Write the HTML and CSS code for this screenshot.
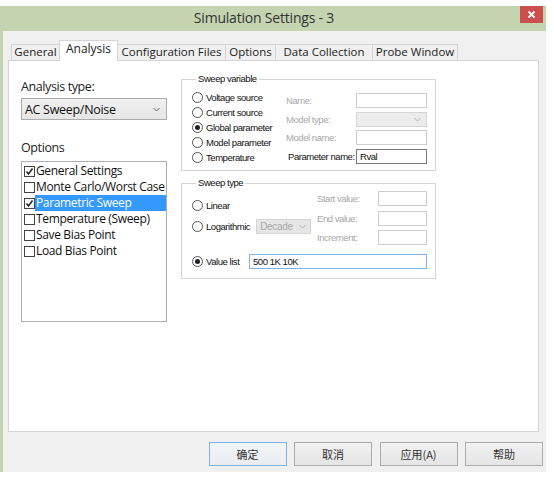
FILE: index.html
```html
<!DOCTYPE html>
<html>
<head>
<meta charset="utf-8">
<link rel="stylesheet" href="styles.css">
</head>
<body>
<div class="window">
  <div class="titlebar">
    <div class="title">Simulation Settings - 3</div>
    <svg class="closebtn" width="23" height="17" viewBox="0 0 23 17"><rect x="0" y="0" width="23" height="17" fill="#c9504f"/><path d="M8.5 5.5 L14.5 11.5 M14.5 5.5 L8.5 11.5" stroke="#ffffff" stroke-width="1.8"/></svg>
  </div>
  <div class="frame">
    <div class="tabs">
      <div class="tab w-general">General</div>
      <div class="tab active w-analysis">Analysis</div>
      <div class="tab w-config">Configuration Files</div>
      <div class="tab w-options">Options</div>
      <div class="tab w-data">Data Collection</div>
      <div class="tab w-probe">Probe Window</div>
    </div>
    <div class="panel">
      <div class="left">
        <div class="biglabel">Analysis type:</div>
        <div class="combo">
          <span>AC Sweep/Noise</span>
          <svg class="chev" width="7" height="5" viewBox="0 0 7 5"><path d="M0.5 1 L3.5 4 L6.5 1" fill="none" stroke="#666" stroke-width="1"/></svg>
        </div>
        <div class="biglabel options-label">Options</div>
        <div class="listbox">
          <div class="item"><span class="cb"><svg width="9" height="9" viewBox="0 0 9 9"><path d="M1.5 4.5 L3.5 7 L7.5 1.5" fill="none" stroke="#222" stroke-width="1.5"/></svg></span><span class="itxt">General Settings</span></div>
          <div class="item"><span class="cb"></span><span class="itxt">Monte Carlo/Worst Case</span></div>
          <div class="item"><span class="cb"><svg width="9" height="9" viewBox="0 0 9 9"><path d="M1.5 4.5 L3.5 7 L7.5 1.5" fill="none" stroke="#222" stroke-width="1.5"/></svg></span><span class="itxt selected">Parametric Sweep</span></div>
          <div class="item"><span class="cb"></span><span class="itxt">Temperature (Sweep)</span></div>
          <div class="item"><span class="cb"></span><span class="itxt">Save Bias Point</span></div>
          <div class="item"><span class="cb"></span><span class="itxt">Load Bias Point</span></div>
        </div>
      </div>
      <div class="right">
        <fieldset class="group g1">
          <legend>Sweep variable</legend>
          <div class="g1-body">
            <div class="radios">
              <div class="radio"><span class="rb"></span>Voltage source</div>
              <div class="radio"><span class="rb"></span>Current source</div>
              <div class="radio"><span class="rb on"></span>Global parameter</div>
              <div class="radio"><span class="rb"></span>Model parameter</div>
              <div class="radio"><span class="rb"></span>Temperature</div>
            </div>
            <div class="fields f1">
              <span class="flabel dis">Name:</span><span class="input light"></span>
              <span class="flabel dis">Model type:</span><span class="input dropdis"><svg class="chev" width="7" height="5" viewBox="0 0 7 5"><path d="M0.5 1 L3.5 4 L6.5 1" fill="none" stroke="#b0b0b0" stroke-width="1"/></svg></span>
              <span class="flabel dis">Model name:</span><span class="input light"></span>
              <span class="flabel pn">Parameter name:</span><span class="input dark">Rval</span>
            </div>
          </div>
        </fieldset>
        <fieldset class="group g2">
          <legend>Sweep type</legend>
          <div class="g2-top">
            <div class="g2-left">
              <div class="radio r-linear"><span class="rb"></span>Linear</div>
              <div class="radio r-log"><span class="rb"></span>Logarithmic<span class="decade">Decade<svg class="chev" width="7" height="5" viewBox="0 0 7 5"><path d="M0.5 1 L3.5 4 L6.5 1" fill="none" stroke="#b0b0b0" stroke-width="1"/></svg></span></div>
            </div>
            <div class="fields f2">
              <span class="flabel dis">Start value:</span><span class="input light"></span>
              <span class="flabel dis">End value:</span><span class="input light"></span>
              <span class="flabel dis">Increment:</span><span class="input light"></span>
            </div>
          </div>
          <div class="radio vlist"><span class="rb on"></span><span class="vl-label">Value list</span><span class="input focus">500 1K 10K</span></div>
        </fieldset>
      </div>
    </div>
    <div class="buttons">
      <div class="btn default">确定</div>
      <div class="btn">取消</div>
      <div class="btn">应用(A)</div>
      <div class="btn">帮助</div>
    </div>
  </div>
</div>
</body>
</html>
```

FILE: styles.css
```css
* { box-sizing: border-box; }
html, body { margin: 0; padding: 0; background: #fff; }
body { padding-top: 6px; font-family: "Open Sans", "Noto Sans CJK SC", sans-serif; color: #1e1e1e; }

.window { width: 546px; }

.titlebar {
  height: 25px;
  background-color: #c4d4b1;
  display: flex;
  align-items: flex-start;
}
.title {
  flex: 1;
  text-align: center;
  font-size: 14px;
  letter-spacing: -0.2px;
  line-height: 24px;
  color: #333;
  padding-left: 8px;
}
.closebtn {
  flex: none;
  display: block;
  margin-right: 3px;
}

.frame {
  height: 441px;
  background: #f0f0f0;
  border-left: 3px solid #c4d4b1;
  padding: 9px 5px 0 5px;
}

.tabs {
  display: flex;
  align-items: flex-end;
  height: 20px;
  padding-left: 3px;
  position: relative;
  z-index: 1;
}
.tab {
  height: 16px;
  border: 1px solid #d5d5d5;
  border-bottom: none;
  margin-right: -1px;
  background: #f0f0f0;
  font-size: 11.5px;
  line-height: 14px;
  text-align: center;
  color: #222;
  white-space: nowrap;
}
.tab.active {
  height: 21px;
  margin-bottom: -1px;
  background: #fff;
  line-height: 15px;
  font-size: 12px;
}
.w-general { width: 49px; }
.w-analysis { width: 59px; }
.w-config { width: 109px; }
.w-options { width: 51px; }
.w-data { width: 98px; }
.w-probe { width: 86px; }

.panel {
  width: 531px;
  height: 372px;
  background: #fff;
  border: 1px solid #d5d5d5;
  display: flex;
  padding: 13px 0 0 12px;
}

.left { width: 146px; padding-top: 5px; }
.biglabel {
  font-size: 12.5px;
  letter-spacing: -0.4px;
  line-height: 16px;
  color: #222;
}
.combo {
  margin-top: 3px;
  height: 22px;
  border: 1px solid #acacac;
  background: linear-gradient(#f0f0f0, #e6e6e6);
  display: flex;
  align-items: center;
  justify-content: space-between;
  padding: 0 6px 0 3px;
  font-size: 12.5px;
  letter-spacing: -0.3px;
  color: #111;
}
.options-label { margin-top: 20px; }
.listbox {
  margin-top: 5px;
  height: 161px;
  border: 1px solid #abadb3;
  padding: 1px 0 0 1px;
}
.item {
  display: flex;
  align-items: center;
  height: 16px;
}
.cb {
  width: 11px;
  height: 11px;
  border: 1px solid #444;
  margin-left: 1px;
  background: #fff;
  display: flex;
  align-items: center;
  justify-content: center;
  flex: none;
}
.itxt {
  font-size: 12px;
  letter-spacing: -0.35px;
  line-height: 16px;
  padding-left: 1px;
  flex: 1;
  white-space: nowrap;
  color: #111;
}
.itxt.selected { background: #3399ff; color: #fff; }

.right { margin-left: 14px; width: 254px; }

.group {
  margin: 0;
  border: 1px solid #d5d5d5;
  font-family: "Liberation Sans", Arial, sans-serif;
  font-size: 9.5px;
  letter-spacing: -0.45px;
  color: #111;
}
.group legend {
  font-size: 9.5px;
  line-height: 10px;
  padding: 0 2px;
  margin-left: 4px;
}
.g1 { padding: 6px 8px 5px 10px; }
.g1-body { display: flex; }
.radios { width: 94px; }
.radio {
  display: flex;
  align-items: center;
  height: 15px;
  white-space: nowrap;
}
.rb {
  width: 11px;
  height: 11px;
  border: 1px solid #555;
  border-radius: 50%;
  background: #fff;
  margin-right: 3px;
  flex: none;
  display: flex;
  align-items: center;
  justify-content: center;
}
.rb.on::after {
  content: "";
  width: 5px;
  height: 5px;
  border-radius: 50%;
  background: #222;
}
.fields {
  display: grid;
  align-items: center;
}
.f1 {
  margin-top: 3px;
  grid-template-columns: 70px 71px;
  grid-auto-rows: 15px;
  row-gap: 3.5px;
}
.flabel { white-space: nowrap; }
.flabel.dis { color: #a8a8a8; }
.flabel.pn { padding-left: 2px; }
.input {
  height: 100%;
  border: 1px solid #cfcfcf;
  background: #fff;
  display: flex;
  align-items: center;
  padding-left: 3px;
}
.input.dark { border-color: #7a7a7a; }
.input.dropdis {
  background: #ececec;
  border-color: #d5d5d5;
  justify-content: flex-end;
  padding-right: 5px;
}
.input.focus { border-color: #7eb4ea; }

.g2 { margin-top: 7px; padding: 3px 8px 9px 10px; }
.g2-top { display: flex; }
.g2-left { width: 125px; padding-top: 6px; }
.r-linear { height: 16px; }
.r-log { height: 16px; margin-top: 5px; }
.decade {
  margin-left: 6px;
  width: 55px;
  height: 15px;
  background: #e6e6e6;
  border: 1px solid #d5d5d5;
  color: #a8a8a8;
  display: flex;
  align-items: center;
  justify-content: space-between;
  padding: 0 4px 0 3px;
  font-size: 10px;
  letter-spacing: -0.3px;
}
.f2 {
  grid-template-columns: 61px 49px;
  grid-auto-rows: 15px;
  row-gap: 4.5px;
}
.vlist { margin-top: 9px; }
.vl-label { width: 43px; }
.vlist .input { flex: 1; }

.buttons {
  margin-top: 10px;
  display: flex;
  justify-content: flex-end;
  gap: 7.5px;
  margin-right: -2px;
}
.btn {
  width: 78px;
  height: 24px;
  border: 1px solid #acacac;
  background: linear-gradient(#f0f0f0, #e5e5e5);
  font-family: "Noto Sans CJK SC", sans-serif;
  font-size: 11px;
  line-height: 22px;
  text-align: center;
  color: #333;
}
.btn.default { border-color: #7eb4ea; background: linear-gradient(#f3f6f9, #e8ecf0); }
```
